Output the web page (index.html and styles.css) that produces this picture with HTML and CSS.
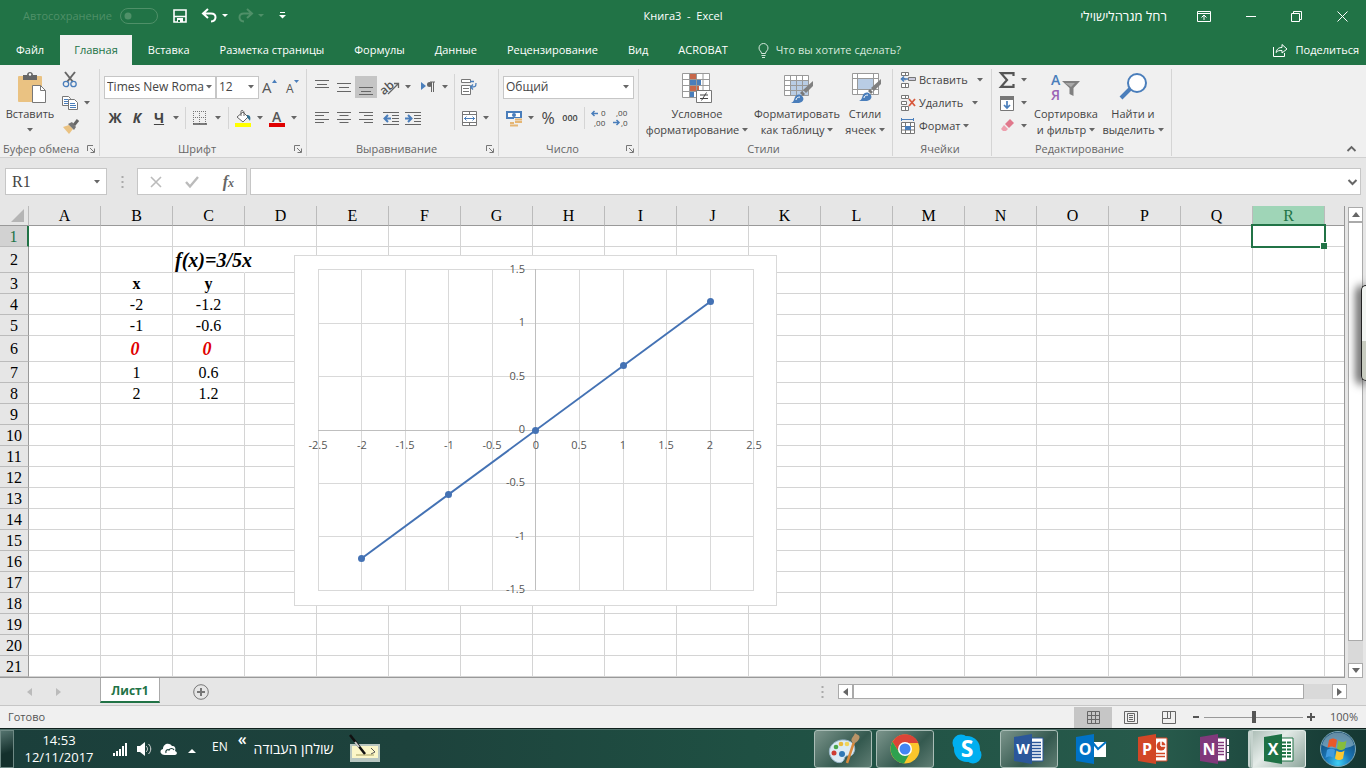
FILE: index.html
```html
<!DOCTYPE html>
<html lang="ru">
<head>
<meta charset="utf-8">
<title>Книга3 - Excel</title>
<link rel="stylesheet" href="styles.css">
</head>
<body>
<svg class="defs" aria-hidden="true">
  <defs>
    <symbol id="caret" viewBox="0 0 6 4"><path d="M0 0h6L3 3.500z" fill="#666"/></symbol>
    <symbol id="launch" viewBox="0 0 8 8"><path d="M.5 6V.5H6M3 3l4 4M7.500 3.500v4h-4" fill="none" stroke="#777"/></symbol>
    <symbol id="brush" viewBox="0 0 24 24"><path d="M23 1v5l-7 7-3-3z" fill="#808080"/><path d="M12 11l3 3-2 2-3-3z" fill="#777"/><path d="M1 23c3-1 3-4 4-6s4-4 7-1 1 6-3 7z" fill="#4a7ebb"/><path d="M6 20c0-2 2-3 4-3" stroke="#fff" fill="none"/></symbol>
  </defs>
</svg>

<header class="top">
  <div class="titlebar">
    <div class="quick">
      <span class="autosave">Автосохранение</span>
      <button class="bare switch" aria-label="Автосохранение"><svg width="38" height="16"><rect x=".5" y=".5" width="37" height="15" rx="7.500" fill="none" stroke="#4f9068"/><circle cx="8" cy="8" r="3.500" fill="#4f9068"/></svg></button>
      <button class="bare" aria-label="Сохранить"><svg width="14" height="14"><path d="M1 1h12v12H1zM1 7.500h12" fill="none" stroke="#fff" stroke-width="1.600"/><path d="M4 9h6v4H4z" fill="#fff"/><path d="M5 11h2v2H5z" fill="#217346"/></svg></button>
      <button class="bare undo" aria-label="Отменить"><svg width="26" height="14"><path d="M6 0L1 4.500 6 9M1.500 4.500H9c6 0 6 7.500 0 8" fill="none" stroke="#fff" stroke-width="2"/><path d="M20 5h6l-3 3z" fill="#fff"/></svg></button>
      <button class="bare" aria-label="Вернуть"><svg width="26" height="14"><path d="M9 0l5 4.500L9 9M13.500 4.500H6c-6 0-6 7.500 0 8" fill="none" stroke="#4f9068" stroke-width="2"/><path d="M20 5h6l-3 3z" fill="#4f9068"/></svg></button>
      <button class="bare more" aria-label="Настроить"><svg width="7" height="8"><path d="M1 .5h5" stroke="#fff"/><path d="M0 3h7L3.500 6.500z" fill="#fff"/></svg></button>
    </div>
    <h1 class="title">Книга3&nbsp; -&nbsp; Excel</h1>
    <div class="winbtns">
      <span class="user" dir="rtl">רחל מגרהלישוילי</span>
      <button class="bare" aria-label="Лента"><svg width="14" height="11"><path d="M.5.5h13v10H.5zM1 2.500h12M7 9V5M4.500 6.500L7 4l2.500 2.500" fill="none" stroke="#fff"/></svg></button>
      <button class="bare" aria-label="Свернуть"><svg width="10" height="11"><path d="M0 5.500h10" stroke="#fff"/></svg></button>
      <button class="bare" aria-label="Окно"><svg width="11" height="11"><path d="M.5 2.500h8v8h-8zM2.500 2.500v-2h8v8h-2" fill="none" stroke="#fff"/></svg></button>
      <button class="bare" aria-label="Закрыть"><svg width="11" height="11"><path d="M.5.5l10 10M10.500.5l-10 10" stroke="#fff"/></svg></button>
    </div>
  </div>
  <nav class="tabs">
    <a href="#">Файл</a><a href="#" class="active">Главная</a><a href="#">Вставка</a><a href="#">Разметка страницы</a><a href="#">Формулы</a><a href="#">Данные</a><a href="#">Рецензирование</a><a href="#">Вид</a><a href="#">ACROBAT</a>
    <a href="#" class="tell"><svg width="11" height="15"><path d="M3.500 10.500C3.500 8 1 8 1 5a4.500 4.500 0 0 1 9 0c0 3-2.500 3-2.500 5.500zM3.500 12.500h4M4 14.500h3" fill="none" stroke="#d5e8dc"/></svg>Что вы хотите сделать?</a>
    <a href="#" class="share"><svg width="16" height="14"><path d="M1.500 4v9.500h11V10" fill="none" stroke="#fff"/><path d="M4 9.500c1-4 3-5 6-5V1.500L15 6l-5 4V7.500c-3 0-4 0-6 2z" fill="none" stroke="#fff"/></svg>Поделиться</a>
  </nav>
</header>

<section class="ribbon">
  <div class="group clip">
    <div class="body">
      <button class="big paste"><svg width="30" height="32"><rect x="3" y="4" width="24" height="26" rx="1" fill="#eac282"/><path d="M8 3h4c0-4 6-4 6 0h4v5H8z" fill="#666"/><circle cx="15" cy="2.500" r="1.200" fill="#fff"/><path d="M17.500 13.500h8l5 5v12h-13z" fill="#fff" stroke="#777"/><path d="M25.500 13.500v5h5" fill="none" stroke="#777"/></svg><span>Вставить</span><svg class="caret"><use href="#caret"/></svg></button>
      <div class="stack">
        <button class="tool" aria-label="Вырезать"><svg width="16" height="16"><path d="M3 0l8 10M13 0L5 10" stroke="#666" stroke-width="2"/><circle cx="4" cy="12" r="2.700" fill="none" stroke="#4a7ebb" stroke-width="1.300"/><circle cx="11.500" cy="12" r="2.700" fill="none" stroke="#4a7ebb" stroke-width="1.300"/></svg></button>
        <div class="line"><button class="tool" aria-label="Копировать"><svg width="16" height="14"><path d="M.5.5h6l2 2v7h-8z" fill="#fff" stroke="#777"/><path d="M2 3.500h4M2 5.500h4M2 7.500h4" stroke="#4a7ebb"/><path d="M6.500 3.500h6l3 3v7h-9z" fill="#fff" stroke="#777"/><path d="M8 7.500h5M8 9.500h6M8 11.500h6" stroke="#4a7ebb"/></svg></button><button class="drop slim" aria-label="Ещё"><svg class="caret"><use href="#caret"/></svg></button></div>
        <button class="tool" aria-label="Формат по образцу"><svg width="17" height="15"><path d="M1 8l6-2 4 4-4 5z" fill="#eac282"/><path d="M6 5l6 6 2-3-4-5z" fill="#777"/><path d="M12 6l4-5" stroke="#666" stroke-width="3"/></svg></button>
      </div>
    </div>
    <div class="label"><span>Буфер обмена</span><svg class="launch"><use href="#launch"/></svg></div>
  </div>

  <div class="group font">
    <div class="body rows">
      <div class="line">
        <label class="combo name"><select aria-label="Шрифт"><option>Times New Roma</option></select><svg class="caret"><use href="#caret"/></svg></label>
        <label class="combo size"><select aria-label="Размер"><option>12</option></select><svg class="caret"><use href="#caret"/></svg></label>
        <button class="tool" aria-label="Увеличить"><svg width="16" height="16"><text x="0" y="14" font-size="15" fill="#555">A</text><path d="M10 4l2.500-3.500L15 4z" fill="#4a7ebb"/></svg></button>
        <button class="tool" aria-label="Уменьшить"><svg width="16" height="16"><text x="2" y="14" font-size="12" fill="#555">A</text><path d="M10 1l2.500 3L15 1z" fill="#4a7ebb"/></svg></button>
      </div>
      <div class="line">
        <button class="tool b">Ж</button><button class="tool b i">К</button><button class="tool b u">Ч</button><button class="drop slim" aria-label="Ещё"><svg class="caret"><use href="#caret"/></svg></button><i class="sep"></i>
        <button class="tool" aria-label="Границы"><svg width="14" height="14"><path d="M.5 0v13M6.500 0v13M12.500 0v13M0 .5h13M0 6.500h13" stroke="#777" stroke-dasharray="1 1" fill="none"/><path d="M0 13h14" stroke="#555" stroke-width="1.500"/></svg></button><button class="drop" aria-label="Ещё"><svg class="caret"><use href="#caret"/></svg></button><i class="sep"></i>
        <button class="tool" aria-label="Заливка"><svg width="17" height="17"><path d="M2 7l6-5 5 5-5 5z" fill="#fff" stroke="#666"/><path d="M6 6V1.500c0-2 3-1 3 1V6" fill="none" stroke="#666"/><path d="M12 5c3 0 4 2 3 6-1-2-2-2-3-4z" fill="#31708f"/><path d="M0 13h16v4H0z" fill="#ff0"/></svg></button><button class="drop slim" aria-label="Ещё"><svg class="caret"><use href="#caret"/></svg></button>
        <button class="tool" aria-label="Цвет текста"><svg width="17" height="17"><text x="3" y="12" font-size="14" font-weight="600" fill="#555">A</text><path d="M0 13h16v4H0z" fill="#e00000"/></svg></button><button class="drop slim" aria-label="Ещё"><svg class="caret"><use href="#caret"/></svg></button>
      </div>
    </div>
    <div class="label"><span>Шрифт</span><svg class="launch"><use href="#launch"/></svg></div>
  </div>

  <div class="group align">
    <div class="body">
      <div class="rows">
        <div class="line">
          <button class="tool" aria-label="По верху"><svg width="14" height="16"><path d="M0 1.500h14M2 5.500h10M0 8.500h14" stroke="#666"/></svg></button><button class="tool" aria-label="По середине"><svg width="14" height="16"><path d="M0 4.500h14M2 8.500h10M0 12.500h14" stroke="#666"/></svg></button><button class="tool on" aria-label="По низу"><svg width="14" height="16"><path d="M0 8.500h14M2 12.500h10M0 15.500h14" stroke="#666"/></svg></button>
          <button class="tool gap" aria-label="Ориентация"><svg width="17" height="16"><text x="-3" y="12" font-size="12" font-weight="600" fill="#555" transform="rotate(-40 5 9)">ab</text><path d="M5 15L15 5M11 4.500h4.500V9" stroke="#666" stroke-width="1.300" fill="none"/></svg></button><button class="drop slim" aria-label="Ещё"><svg class="caret"><use href="#caret"/></svg></button>
          <button class="tool gap" aria-label="Направление"><svg width="14" height="12"><path d="M0 1l5 4-5 4z" fill="#4a7ebb"/><path d="M9 1h5M10.500 1v10M12.500 1v10" stroke="#666"/><circle cx="8.500" cy="3.500" r="2.500" fill="#666"/></svg></button><button class="drop slim" aria-label="Ещё"><svg class="caret"><use href="#caret"/></svg></button>
        </div>
        <div class="line">
          <button class="tool" aria-label="Влево"><svg width="14" height="12"><path d="M0 .5h14M0 3.500h9M0 7.500h14M0 10.500h9" stroke="#666"/></svg></button><button class="tool" aria-label="По центру"><svg width="14" height="12"><path d="M0 .5h14M2.500 3.500h9M0 7.500h14M2.500 10.500h9" stroke="#666"/></svg></button><button class="tool" aria-label="Вправо"><svg width="14" height="12"><path d="M0 .5h14M5 3.500h9M0 7.500h14M5 10.500h9" stroke="#666"/></svg></button>
          <button class="tool gap" aria-label="Уменьшить отступ"><svg width="16" height="13"><path d="M0 .5h16M9 3.500h7M9 6.500h7M9 9.500h7M0 12.500h16" stroke="#666"/><path d="M8 6.500H2M5 3L1.500 6.500 5 10" fill="none" stroke="#4a7ebb" stroke-width="2"/></svg></button><button class="tool" aria-label="Увеличить отступ"><svg width="16" height="13"><path d="M0 .5h16M9 3.500h7M9 6.500h7M9 9.500h7M0 12.500h16" stroke="#666"/><path d="M0 6.500h6M3 3l3.500 3.500L3 10" fill="none" stroke="#4a7ebb" stroke-width="2"/></svg></button>
        </div>
      </div>
      <i class="sep tall"></i>
      <div class="rows">
        <div class="line"><button class="tool" aria-label="Перенос"><svg width="16" height="16"><path d="M.5.5h9v3h-9zM.5 6.500h9v9h-9zM2 9.500h6M2 12.500h6" fill="#fff" stroke="#777"/><path d="M9 2.500h4M15 4c0 4-1 4-5 4M12 5.500L9.500 8l2.500 2.500" fill="none" stroke="#4a7ebb" stroke-width="1.300"/></svg></button></div>
        <div class="line"><button class="tool" aria-label="Объединить"><svg width="15" height="15"><path d="M.5.5h14v14H.5zM.5 3.500h14M.5 11.500h14M7.500.5v3M7.500 11.500v3" fill="#fff" stroke="#777"/><path d="M2 7.500h11M4.500 5.500l-2 2 2 2M10.500 5.500l2 2-2 2" fill="none" stroke="#4a7ebb"/></svg></button><button class="drop slim" aria-label="Ещё"><svg class="caret"><use href="#caret"/></svg></button></div>
      </div>
    </div>
    <div class="label"><span>Выравнивание</span><svg class="launch"><use href="#launch"/></svg></div>
  </div>

  <div class="group number">
    <div class="body rows">
      <div class="line"><label class="combo wide"><select aria-label="Формат"><option>Общий</option></select><svg class="caret"><use href="#caret"/></svg></label></div>
      <div class="line">
        <button class="tool" aria-label="Валюта"><svg width="17" height="17"><path d="M0 1h16v8H0z" fill="#4a7ebb"/><path d="M2 3h12v4H2z" fill="#fff"/><circle cx="8" cy="5" r="2" fill="#4a7ebb"/><path d="M8 8h8v7H4v-4h4z" fill="#f0f0f0"/><path d="M9 9.500h7M9 12h7M4 13h4M4 15.500h8" stroke="#e5b674" stroke-width="2"/></svg></button><button class="drop slim" aria-label="Ещё"><svg class="caret"><use href="#caret"/></svg></button>
        <button class="tool pct">%</button><button class="tool zeros">000</button><i class="sep"></i>
        <button class="tool" aria-label="Увеличить разрядность"><svg width="16" height="16" font-size="8" fill="#444"><text x="10" y="6">0</text><text x="3" y="16">,00</text><path d="M7 3.500H1M3.500 1L1 3.500 3.500 6" fill="none" stroke="#4a7ebb" stroke-width="1.500"/></svg></button>
        <button class="tool" aria-label="Уменьшить разрядность"><svg width="16" height="16" font-size="8" fill="#444"><text x="3" y="6">,00</text><text x="8" y="16">,0</text><path d="M0 12.500h6M3.500 10L6 12.500 3.500 15" fill="none" stroke="#4a7ebb" stroke-width="1.500"/></svg></button>
      </div>
    </div>
    <div class="label"><span>Число</span><svg class="launch"><use href="#launch"/></svg></div>
  </div>

  <div class="group styles">
    <div class="body">
      <button class="big cond"><svg width="30" height="32"><path d="M.5 1.500h27v24H.5z" fill="#fff"/><path d="M8 2h6v5H8zM8 14h9v5H8z" fill="#c8684a"/><path d="M8 8h11v5H8zM8 20h4v5H8z" fill="#4a7ebb"/><path d="M.5 1.500h27v24H.5zM.5 7.500h27M.5 13.500h27M.5 19.500h27M7.500 1.500v24M14.500 1.500v24M21 1.500v24" fill="none" stroke="#999"/><path d="M14.500 18.500h15v12h-15z" fill="#fff" stroke="#777"/><path d="M18 23h8M18 26.500h8M24.500 20.500l-5 8" stroke="#444"/></svg><span>Условное<br>форматирование <svg class="caret"><use href="#caret"/></svg></span></button>
      <button class="big table"><svg width="30" height="32"><path d="M2.500 3.500h24v20h-24z" fill="#fff"/><path d="M9 9h18v15H9z" fill="#b9cde5"/><path d="M2.500 3.500h24v20h-24zM2.500 8.500h24M2.500 13.500h24M2.500 18.500h24M8.500 3.500v20M14.500 3.500v20M20.500 3.500v20" fill="none" stroke="#999"/><use href="#brush" x="8" y="8" width="24" height="24"/></svg><span>Форматировать<br>как таблицу <svg class="caret"><use href="#caret"/></svg></span></button>
      <button class="big cell"><svg width="30" height="32"><path d="M2.500 1.500h26v21h-26z" fill="#fff"/><path d="M8 7h15v10H8z" fill="#b9cde5"/><path d="M2.500 1.500h26v21h-26zM2.500 6.500h26M2.500 17.500h26M7.500 1.500v21M23.500 1.500v21" fill="none" stroke="#999"/><use href="#brush" x="8" y="6" width="24" height="24"/></svg><span>Стили<br>ячеек <svg class="caret"><use href="#caret"/></svg></span></button>
    </div>
    <div class="label"><span>Стили</span></div>
  </div>

  <div class="group cells">
    <div class="body">
      <div class="stack">
        <button class="item"><svg width="16" height="16"><path d="M1.500.5h7v3h-7zM1.500 11.500h7v4h-7zM5.500.5v3M5.500 11.500v4M1 6.500h4v2" fill="#fff" stroke="#777"/><path d="M8.500 5.500h7v3h-7z" fill="#ccd" stroke="#777"/><path d="M8 7H1.500M4 4.500L1.500 7 4 9.500" fill="none" stroke="#4a7ebb" stroke-width="1.600"/></svg><span>Вставить</span><svg class="caret far"><use href="#caret"/></svg></button>
        <button class="item"><svg width="16" height="16"><path d="M1.500.5h7v3h-7zM1.500 11.500h7v4h-7zM5.500.5v3M5.500 11.500v4M1.500 6.500h5v3h-5z" fill="#fff" stroke="#777"/><path d="M9 4l6 7M15 4l-6 7" stroke="#d8583c" stroke-width="1.800"/></svg><span>Удалить</span><svg class="caret far"><use href="#caret"/></svg></button>
        <button class="item"><svg width="16" height="16"><path d="M1.500 4.500h13v11h-13zM1.500 8.500h13M1.500 12h13M5.500 4.500v11M10.500 4.500v11" fill="#fff" stroke="#777"/><path d="M5 8h6v4H5z" fill="#4a7ebb"/><path d="M1 1.500h12M1.500 0v3M13.500 0v3" stroke="#4a7ebb"/></svg><span>Формат</span><svg class="caret"><use href="#caret"/></svg></button>
      </div>
    </div>
    <div class="label"><span>Ячейки</span></div>
  </div>

  <div class="group edit">
    <div class="body">
      <div class="stack">
        <div class="line"><button class="tool" aria-label="Сумма"><svg width="16" height="16"><path d="M14.500 4V1.200H2L8 8l-6 6.800h12.500V12" fill="none" stroke="#555" stroke-width="2.200"/></svg></button><button class="drop slim" aria-label="Ещё"><svg class="caret"><use href="#caret"/></svg></button></div>
        <div class="line"><button class="tool" aria-label="Заполнить"><svg width="14" height="15"><path d="M.5.5h13v14H.5z" fill="#fff" stroke="#777"/><path d="M0 0h14v4H0z" fill="#777"/><path d="M7 5v7M4 9l3 3 3-3" fill="none" stroke="#4a7ebb" stroke-width="1.700"/></svg></button><button class="drop slim" aria-label="Ещё"><svg class="caret"><use href="#caret"/></svg></button></div>
        <div class="line"><button class="tool" aria-label="Очистить"><svg width="14" height="14"><path d="M5 5l5-5 4 4-5 5z" fill="#e0788c"/><path d="M4 6l4 4-2 2H3L1 10z" fill="#eda0ae"/></svg></button><button class="drop slim" aria-label="Ещё"><svg class="caret"><use href="#caret"/></svg></button></div>
      </div>
      <button class="big sort"><svg width="30" height="32"><text x="0" y="13" font-size="14" font-weight="600" fill="#4a7ebb">А</text><text x="0" y="28" font-size="14" font-weight="600" fill="#9b62b5">Я</text><path d="M11 9h18l-6.500 7v8l-4-2v-6z" fill="#808080"/><path d="M14 11h10l-4 4z" fill="#aaa"/></svg><span>Сортировка<br>и фильтр <svg class="caret"><use href="#caret"/></svg></span></button>
      <button class="big find"><svg width="30" height="32"><path d="M12 17L3 26" stroke="#4a7ebb" stroke-width="4"/><circle cx="19" cy="11" r="9" fill="#fff" stroke="#4a7ebb" stroke-width="2"/></svg><span>Найти и<br>выделить <svg class="caret"><use href="#caret"/></svg></span></button>
    </div>
    <div class="label"><span>Редактирование</span></div>
  </div>
  <button class="bare fold" aria-label="Свернуть ленту"><svg width="9" height="6"><path d="M.5 5l4-4 4 4" fill="none" stroke="#666" stroke-width="1.800"/></svg></button>
</section>

<section class="formula">
  <label class="namebox"><input value="R1" aria-label="Имя"><svg class="caret"><use href="#caret"/></svg></label>
  <svg class="dots" width="3" height="12"><path d="M1.500 0v12" stroke="#aaa" stroke-width="2" stroke-dasharray="2 3"/></svg>
  <div class="fxbox">
    <button class="bare" aria-label="Отмена"><svg width="12" height="12"><path d="M1 1l10 10M11 1L1 11" stroke="#bbb" stroke-width="1.600"/></svg></button>
    <button class="bare" aria-label="Ввод"><svg width="14" height="12"><path d="M1 6l4 4.500L13 1" fill="none" stroke="#bbb" stroke-width="2.400"/></svg></button>
    <button class="bare fx">f<small>x</small></button>
  </div>
  <label class="fbar"><input aria-label="Формула"><svg width="9" height="6"><path d="M.5 1l4 4 4-4" fill="none" stroke="#666" stroke-width="2"/></svg></label>
</section>

<main class="sheet">
  <div class="gridwrap">
    <table class="grid" id="grid"></table>
    <figure class="chart">
      <svg width="481" height="349" viewBox="295 256 481 349">
        <path d="M318.500 269v321M361.500 269v321M405.500 269v321M448.500 269v321M492.500 269v321M579.500 269v321M623.500 269v321M666.500 269v321M710.500 269v321M753.500 269v321M318 269.500h436M318 323.500h436M318 376.500h436M318 483.500h436M318 536.500h436M318 590.500h436" stroke="#d9d9d9"/>
        <path d="M535.500 269v321M318 430.500h436" stroke="#bfbfbf"/>
        <path d="M361.500 558.500L710.500 301.500" stroke="#4472b4" stroke-width="2"/>
        <g fill="#4472b4"><circle cx="361.500" cy="558.500" r="3.500"/><circle cx="448.500" cy="494.500" r="3.500"/><circle cx="535.500" cy="430.500" r="3.500"/><circle cx="623.500" cy="365.500" r="3.500"/><circle cx="710.500" cy="301.500" r="3.500"/></g>
        <g class="xax"><text x="318" y="449">-2.5</text><text x="362" y="449">-2</text><text x="405" y="449">-1.5</text><text x="449" y="449">-1</text><text x="492" y="449">-0.5</text><text x="536" y="449">0</text><text x="579" y="449">0.5</text><text x="623" y="449">1</text><text x="666" y="449">1.5</text><text x="710" y="449">2</text><text x="754" y="449">2.5</text></g>
        <g class="yax"><text x="525" y="273">1.5</text><text x="525" y="326">1</text><text x="525" y="380">0.5</text><text x="525" y="433">0</text><text x="525" y="486">-0.5</text><text x="525" y="540">-1</text><text x="525" y="593">-1.5</text></g>
      </svg>
    </figure>
  </div>
  <div class="vscroll"><span class="arrow"><svg width="8" height="5"><path d="M0 5l4-5 4 5z" fill="#666"/></svg></span><span class="thumb"></span><span class="track"></span><span class="arrow"><svg width="8" height="5"><path d="M0 0h8L4 5z" fill="#666"/></svg></span></div>
  <div class="gadget"></div>
</main>

<section class="sheetbar">
  <button class="bare nav" aria-label="Назад"><svg width="5" height="8"><path d="M5 0v8L0 4z" fill="#bbb"/></svg></button>
  <button class="bare nav" aria-label="Вперёд"><svg width="5" height="8"><path d="M0 0v8l5-4z" fill="#bbb"/></svg></button>
  <a href="#" class="sheettab">Лист1</a>
  <button class="bare add" aria-label="Новый лист"><svg width="16" height="16"><circle cx="8" cy="8" r="7.300" fill="none" stroke="#777"/><path d="M4 8h8M8 4v8" stroke="#777" stroke-width="2"/></svg></button>
  <svg class="dots" width="3" height="12"><path d="M1.500 0v12" stroke="#aaa" stroke-width="2" stroke-dasharray="2 3"/></svg>
  <div class="hscroll"><span class="arrow"><svg width="5" height="8"><path d="M5 0v8L0 4z" fill="#666"/></svg></span><span class="thumb"></span><span class="track"></span><span class="arrow"><svg width="5" height="8"><path d="M0 0v8l5-4z" fill="#666"/></svg></span></div>
</section>

<footer class="status">
  <span class="ready">Готово</span>
  <button class="bare view on" aria-label="Обычный"><svg width="13" height="13"><path d="M.5.5h12v12H.5zM.5 4.500h12M.5 8.500h12M4.500.5v12M8.500.5v12" fill="none" stroke="#666"/></svg></button>
  <button class="bare view" aria-label="Разметка"><svg width="14" height="13"><path d="M.5.5h13v12H.5zM3.500 2.500h7v8h-7zM5 4.500h4M5 6.500h4M5 8.500h4" fill="none" stroke="#666"/></svg></button>
  <button class="bare view" aria-label="Страничный"><svg width="14" height="13"><path d="M.5.5h13v12H.5zM5.500.5v7h-5M8.500.5v7h-3M8.500 7.500v-7" fill="none" stroke="#666"/></svg></button>
  <button class="bare zoombtn" aria-label="Мельче"><svg width="8" height="8"><path d="M1 4h6" stroke="#555" stroke-width="2"/></svg></button>
  <input class="zoom" type="range" min="0" max="100" value="50" aria-label="Масштаб">
  <button class="bare zoombtn" aria-label="Крупнее"><svg width="8" height="8"><path d="M0 4h8M4 0v8" stroke="#555" stroke-width="2"/></svg></button>
  <span class="pct100">100%</span>
</footer>

<footer class="taskbar">
  <button class="bare peek" aria-label="Рабочий стол"></button>
  <div class="clock"><span>14:53</span><span>12/11/2017</span></div>
  <svg class="tray" width="92" height="18">
    <path d="M2 13v3M5 11v5M8 9v7M11 6v10M14 3v13" stroke="#fff" stroke-width="2"/>
    <path d="M25 6h3l5-4v14l-5-4h-3z" fill="#fff"/><path d="M34 6c2 2 2 4 0 6M36.500 4c3 3 3 7 0 10" fill="none" stroke="#ddd"/>
    <path d="M53 15c-5 0-6-5-2-6 0-5 6-7 9-3 3 0 4 2 3 5 3 1 2 4 0 4z" fill="#fff"/><path d="M54 13c-1-3 2-4 3-3 1-2 4-2 5 0" fill="none" stroke="#1d423c" stroke-width="1.200"/>
    <path d="M76 13h8l-4-4z" fill="#fff"/>
  </svg>
  <span class="lang">EN</span>
  <span class="chev">«</span>
  <span class="desk" dir="rtl">שולחן העבודה</span>
  <svg class="tablet" width="32" height="30"><path d="M1 10h30v18H1z" fill="#b8c6c0"/><path d="M3 12h26v12H3z" fill="#fbf6c8"/><path d="M7 21h18" stroke="#a8a060"/><path d="M22 14l4 4-4 2" fill="none" stroke="#555"/><path d="M1 1l15 19" stroke="#111" stroke-width="2.500"/><path d="M6 8l4 5" stroke="#ccc" stroke-width="2"/></svg>
  <nav class="apps">
    <button class="app open" aria-label="Paint"><svg width="32" height="32"><path d="M3 22C0 14 8 6 18 7c9 1 12 8 8 14-2 3-4 1-7 2-2 1-1 4-4 6-4 2-10-1-12-7z" fill="#dcebf4" stroke="#9ab8cc"/><circle cx="7" cy="20" r="2.500" fill="#cf3c32"/><circle cx="9" cy="14" r="2.300" fill="#4aa64c"/><circle cx="14" cy="11" r="2.300" fill="#e9ba3b"/><circle cx="20" cy="11" r="2.300" fill="#f0d45a"/><circle cx="15" cy="21" r="3" fill="#3178b5"/><path d="M27 9l-7 21" stroke="#d98a3d" stroke-width="2.500"/><path d="M25 9c-2-4 2-5 3-9 2 2 6 2 4 6-1 2-3 4-5 4z" fill="#b99468"/></svg></button>
    <button class="app open" aria-label="Chrome"><svg width="30" height="30"><circle cx="15" cy="15" r="14.500" fill="#fbc62c"/><path d="M2.500 7.800A14.500 14.500 0 0 1 28.500 9H15l-6 9z" fill="#db4437"/><path d="M2.500 7.800A14.500 14.500 0 0 0 14 29.500L20.500 18 9 18z" fill="#2ea14f"/><circle cx="15" cy="15" r="7" fill="#fff"/><circle cx="15" cy="15" r="5.500" fill="#4285f4"/></svg></button>
    <button class="app" aria-label="Skype"><svg width="32" height="32"><circle cx="10" cy="10" r="8.500" fill="#00aff0"/><circle cx="22" cy="22" r="8.500" fill="#00aff0"/><circle cx="16" cy="16" r="13" fill="#00aff0"/><text x="16" y="24" text-anchor="middle" font-size="23" font-weight="700" fill="#fff">S</text></svg></button>
    <button class="app open" aria-label="Word"><svg width="30" height="30"><path d="M16 4h13v23H16z" fill="#fff" stroke="#2b579a"/><path d="M18 8.500h9M18 11.500h9M18 14.500h9M18 17.500h9M18 20.500h9M18 23.500h9" stroke="#2b579a" stroke-width="1.500"/><path d="M0 3l18-3v30L0 27z" fill="#2b579a"/><text x="9" y="20" text-anchor="middle" font-size="14" font-weight="700" fill="#fff">W</text></svg></button>
    <button class="app" aria-label="Outlook"><svg width="30" height="30"><path d="M17 8h13v15H17z" fill="#fff"/><path d="M17 9l5 6 8-7" fill="none" stroke="#0072c6" stroke-width="2"/><path d="M0 3l18-3v30L0 27z" fill="#0072c6"/><text x="9" y="21" text-anchor="middle" font-size="16" font-weight="700" fill="#fff">O</text></svg></button>
    <button class="app" aria-label="PowerPoint"><svg width="30" height="30"><path d="M16 4h13v23H16z" fill="#fff" stroke="#d24726"/><circle cx="23" cy="12" r="4.500" fill="#d24726"/><path d="M23 12V7M23 12h5" stroke="#fff" stroke-width="1.500"/><path d="M18 19.500h9M18 22.500h9" stroke="#d24726" stroke-width="1.500"/><path d="M0 3l18-3v30L0 27z" fill="#d24726"/><text x="9" y="21" text-anchor="middle" font-size="16" font-weight="700" fill="#fff">P</text></svg></button>
    <button class="app" aria-label="OneNote"><svg width="30" height="30"><path d="M16 4h10v23H16z" fill="#fff" stroke="#80397b"/><path d="M18 8.500h6M18 11.500h6M18 14.500h6M18 17.500h6M18 20.500h6" stroke="#80397b" stroke-width="1.500"/><path d="M27 5h2v6h-2zM27 12h2v6h-2zM27 19h2v6h-2z" fill="#fff"/><path d="M0 3l18-3v30L0 27z" fill="#80397b"/><text x="9" y="21" text-anchor="middle" font-size="16" font-weight="700" fill="#fff">N</text></svg></button>
    <button class="app current" aria-label="Excel"><svg width="30" height="30"><path d="M16 4h13v23H16z" fill="#fff" stroke="#217346"/><path d="M18 8.500h9M18 12h9M18 15.500h9M18 19h9M18 22.500h9" stroke="#217346" stroke-width="2" stroke-dasharray="4 1"/><path d="M0 3l18-3v30L0 27z" fill="#1e7145"/><text x="9" y="21" text-anchor="middle" font-size="16" font-weight="700" fill="#fff">X</text></svg></button>
    <button class="bare orb" aria-label="Пуск"><svg width="38" height="38"><defs><radialGradient id="o" cx=".5" cy=".9" r=".9"><stop offset="0" stop-color="#3fd0f5"/><stop offset=".4" stop-color="#1a76b8"/><stop offset="1" stop-color="#0e3f63"/></radialGradient></defs><circle cx="19" cy="19" r="17.500" fill="url(#o)" stroke="#7fa9b8"/><path d="M3 15a16.500 16.500 0 0 1 32 0c-8 5-24 5-32 0z" fill="#b9d3dc" opacity=".5"/><path d="M10 10c3-2 5-2 8 0l-1.500 8c-3-2-5-2-8 0z" fill="#e8592a"/><path d="M19.500 10.500c3 2 5 2 8 0L26 18.500c-3 2-5 2-8 0z" fill="#86bd3c"/><path d="M8 20c3-2 5-2 8 0l-1.500 8c-3-2-5-2-8 0z" fill="#3f9be0"/><path d="M17.500 20.500c3 2 5 2 8 0L24 28.500c-3 2-5 2-8 0z" fill="#fbc731"/></svg></button>
  </nav>
</footer>
<script src="app.js"></script>
</body>
</html>
```

FILE: styles.css
```css
* { box-sizing: border-box; }
body {
  margin: 0;
  min-height: 100vh;
  display: flex;
  flex-direction: column;
  background: #e6e6e6;
  color: #444;
  font: 11px/16px "Open Sans", "Noto Sans", sans-serif;
  overflow: hidden;
}
svg { display: block; flex: none; overflow: visible; }
svg text { font-family: "Open Sans", "Noto Sans", sans-serif; }
.defs { position: absolute; width: 0; height: 0; }
button, input, select { font: inherit; color: inherit; border: 0; background: none; padding: 0; margin: 0; outline: 0; border-radius: 0; }
a { color: inherit; text-decoration: none; }
.caret { width: 6px; height: 4px; }
.launch { width: 8px; height: 8px; }
.bare { display: flex; align-items: center; justify-content: center; }

/* Title bar and tabs */
.top { background: #217346; color: #fff; }
.titlebar { height: 35px; display: grid; grid-template-columns: 1fr auto 1fr; align-items: center; padding: 0 18px 3px; }
.quick { display: flex; align-items: center; gap: 15px; padding-left: 5px; }
.autosave { color: #4f9068; margin-right: -7px; }
.undo { margin-right: -5px; }
.title { margin: 0; font-size: 11px; font-weight: 400; }
.winbtns { display: flex; align-items: center; justify-content: flex-end; gap: 35px; }
.user { margin-right: -5px; font-size: 13px; }
.tabs { display: flex; height: 30px; gap: 2px; padding-left: 2px; }
.tabs a { display: flex; align-items: center; padding: 0 14px; white-space: nowrap; }
.tabs .active { background: #f0f0f0; color: #217346; }
.tabs .tell { gap: 7px; color: #d5e8dc; }
.tabs .share { gap: 8px; margin-left: auto; padding: 0 7px; }

/* Ribbon */
.ribbon { display: flex; height: 93px; background: #f0f0f0; border-bottom: 1px solid #d0d0d0; }
.group { display: flex; flex-direction: column; border-right: 1px solid #d5d5d5; margin: 4px 0 1px; flex: none; }
.body { display: flex; height: 73px; }
.label { display: flex; justify-content: center; align-items: center; height: 14px; color: #666; padding-right: 4px; }
.label span { flex: 1; text-align: center; white-space: nowrap; }
.clip .label span { text-align: left; padding-left: 3px; }
.rows { display: flex; flex-direction: column; gap: 9px; padding-top: 7px; }
.line { display: flex; align-items: center; height: 22px; }
.stack { display: flex; flex-direction: column; gap: 1px; }
.tool { display: flex; align-items: center; justify-content: center; width: 22px; height: 22px; flex: none; }
.tool.on { background: #c5c5c5; }
.tool.gap { margin-left: 3px; }
.tool.b { font-weight: 700; font-size: 14px; }
.tool.i { font-style: italic; }
.tool.u { text-decoration: underline; }
.tool.pct { font-size: 16px; }
.tool.zeros { font-size: 9px; font-weight: 600; }
.drop { display: flex; align-items: center; justify-content: center; width: 14px; height: 22px; flex: none; }
.drop.slim { width: 12px; }
.sep { width: 1px; height: 22px; background: #d5d5d5; margin: 0 3px; flex: none; }
.sep.tall { height: 56px; margin: 5px 3px 0; }
.combo { display: grid; align-items: center; height: 23px; border: 1px solid #c6c6c6; background: #fff; font-size: 12px; }
.combo select { grid-area: 1 / 1; appearance: none; width: 100%; padding-left: 2px; overflow: hidden; }
.combo .caret { grid-area: 1 / 1; justify-self: end; margin-right: 4px; pointer-events: none; }
.name { width: 112px; }
.name .caret { margin-right: 3px; }
.size { width: 43px; }
.combo.wide { width: 131px; }
.big { display: flex; flex-direction: column; align-items: center; padding-top: 3px; text-align: center; flex: none; white-space: nowrap; }
.big > svg:first-child { margin-bottom: 2px; }
.big span .caret { display: inline-block; vertical-align: 2px; }
.paste { width: 58px; margin-left: 1px; }
.paste > .caret { margin-top: 6px; }
.clip { width: 100px; }
.font { width: 207px; }
.font .rows { padding-left: 4px; }
.align { width: 192px; }
.align .body { padding-left: 4px; }
.number { width: 140px; }
.number .rows { padding-left: 4px; }
.styles { width: 254px; }
.styles .body { padding-left: 2px; }
.cond { width: 112px; }
.table { width: 88px; }
.cell { width: 48px; }
.cells { width: 99px; }
.cells .body { padding-left: 7px; }
.item { display: flex; align-items: center; height: 22px; gap: 3px; white-space: nowrap; }
.far { margin-left: 6px; }
.edit { width: 180px; }
.edit .body { padding-left: 4px; }
.sort { width: 72px; }
.find { width: 62px; }
.fold { margin: auto 10px 5px auto; }

/* Formula bar */
.formula { display: flex; align-items: center; height: 48px; padding: 0 5px 1px; }
.namebox, .fxbox, .fbar { display: flex; align-items: center; height: 27px; background: #fff; border: 1px solid #c6c6c6; }
.namebox { width: 102px; padding: 0 6px; }
.namebox input { width: 100%; font: 16px "Liberation Serif", serif; }
.formula .dots { margin: 0 13px 0 14px; }
.fxbox { width: 110px; justify-content: space-between; padding: 0 12px; margin-right: 3px; }
.fx { font: italic 700 16px "Liberation Serif", serif; color: #666; }
.fx small { font-size: 12px; padding-top: 3px; }
.fbar { flex: 1; padding-right: 3px; }
.fbar input { flex: 1; }

/* Sheet */
.sheet { display: flex; flex: 1; position: relative; }
.gridwrap { flex: 1; position: relative; background: #fff; border-right: 1px solid #999; border-bottom: 1px solid #999; }
.grid { width: 100%; table-layout: fixed; border-collapse: separate; border-spacing: 0; font: 16px/18px "Liberation Serif", serif; color: #000; }
.grid td, .grid th { padding: 0; height: 21px; font-weight: 400; text-align: center; vertical-align: bottom; border-right: 1px solid #d4d4d4; border-bottom: 1px solid #d4d4d4; white-space: nowrap; }
.grid thead th { height: 20px; background: #e6e6e6; border-right-color: #bbb; border-bottom-color: #999; }
.grid tbody th { background: #e6e6e6; border-right-color: #999; border-bottom-color: #bbb; }
.grid tbody th.rowsel { background: #d2d2d2; color: #217346; border-right: 2px solid #217346; }
.grid thead th.colsel { background: #9fd5b7; color: #217346; }
.grid tr > :last-child { border-right: 0; }
.grid .tallrow td, .grid .tallrow th { height: 26px; vertical-align: middle; }
.grid .head { font-weight: 700; }
.grid .zero { font-weight: 700; font-style: italic; font-size: 18px; color: #e00000; padding-right: 3px; }
.grid .fn { font-weight: 700; font-style: italic; font-size: 20px; text-align: left; padding-left: 2px; border-right-color: transparent; }
.rowcol { width: 29px; }
.datacol { width: 72px; }
.corner svg { margin: 0 4px 3px auto; }
.grid td.cursor { position: relative; }
.cursor::before { content: ""; position: absolute; inset: -2px; border: 2px solid #217346; }
.cursor::after { content: ""; position: absolute; right: -3px; bottom: -3px; width: 6px; height: 6px; background: #217346; border: solid #fff; border-width: 1px 0 0 1px; }
.chart { position: absolute; left: 294px; top: 49px; margin: 0; border: 1px solid #d9d9d9; background: #fff; }
.chart text { font-size: 11px; fill: #555; }
.xax { text-anchor: middle; }
.yax { text-anchor: end; }
.vscroll { display: flex; flex-direction: column; width: 21px; padding: 1px 3px 0 3px; }
.arrow { display: flex; align-items: center; justify-content: center; width: 15px; height: 15px; background: #fff; border: 1px solid #aaa; flex: none; }
.thumb { background: #fff; border: 1px solid #aaa; }
.track { background: #d9d9d9; }
.vscroll .thumb { flex: 421; }
.vscroll .track { flex: 22; }
.gadget { position: absolute; right: 0; top: 79px; width: 5px; height: 96px; border: 1px solid #222; border-right: 0; border-radius: 6px 0 0 6px; background: linear-gradient(#f2f5f2 58%, #c8ccc0 58%); box-shadow: -3px 2px 8px 2px #555; }

/* Sheet tabs and status */
.sheetbar { display: flex; align-items: center; height: 28px; border-bottom: 1px solid #c6c6c6; padding-left: 27px; }
.nav + .nav { margin-left: 24px; }
.sheettab { align-self: flex-start; margin-left: 39px; width: 60px; height: 25px; line-height: 25px; text-align: center; font-size: 12px; font-weight: 700; color: #217346; background: #fff; border: 1px solid #aaa; border-top: 0; border-bottom: 2px solid #217346; }
.add { margin-left: 33px; }
.sheetbar .dots { margin-left: auto; }
.hscroll { display: flex; width: 38%; margin: 0 19px 0 14px; }
.hscroll .thumb { flex: 453; }
.hscroll .track { flex: 28; }
.status { display: flex; align-items: center; height: 22px; background: #f0f0f0; padding: 0 8px; color: #555; }
.ready { margin-right: auto; }
.view { width: 38px; height: 21px; }
.view.on { background: #c6c6c6; }
.zoombtn { width: 16px; }
.zoom { appearance: none; width: 99px; height: 12px; }
.zoom::-webkit-slider-runnable-track { height: 12px; background: linear-gradient(#999, #999) center / 100% 1px no-repeat; }
.zoom::-webkit-slider-thumb { appearance: none; width: 4px; height: 12px; background: #555; }
.pct100 { margin-left: 11px; }

/* Taskbar */
.taskbar { display: flex; align-items: center; height: 40px; border-top: 1px solid #10201d; background: linear-gradient(90deg, #1b3f3b, #1d423c 30%, #1f5043 55%, #275a4b 85%, #153733); box-shadow: inset 0 1px #4d7069; color: #fff; }
.peek { width: 14px; height: 38px; background: linear-gradient(160deg, #54736e, #14302c 60%); border: 1px solid #6f8a85; }
.clock { display: flex; flex-direction: column; align-items: center; width: 90px; font-size: 13px; line-height: 17px; }
.tray { margin-left: 8px; }
.lang { margin-left: 8px; margin-bottom: 4px; font-size: 12px; }
.chev { margin-left: 10px; margin-bottom: 20px; font-size: 16px; font-weight: 600; }
.desk { margin-left: 7px; font-size: 14px; }
.tablet { margin-left: 15px; }
.apps { display: flex; align-items: center; gap: 4px; margin-left: auto; }
.app { display: flex; align-items: center; justify-content: center; width: 58px; height: 38px; }
.open { border: 1px solid #a9bdb6; border-radius: 3px; background: linear-gradient(135deg, #7b948b, #34594f 60%, #5f7d73); }
.current { border: 1px solid #e2ebe7; border-left: 5px double #c5d2cd; border-radius: 3px; background: linear-gradient(135deg, #aebfb8, #e4ebe8 40%, #8ca59b); }
.orb { width: 56px; }
```

FILE: app.js
```javascript
const letters = "ABCDEFGHIJKLMNOPQR";
const values = {
  C2: ["f(x)=3/5x", "fn"],
  B3: ["x", "head"], C3: ["y", "head"],
  B4: ["-2"], C4: ["-1.2"],
  B5: ["-1"], C5: ["-0.6"],
  B6: ["0", "zero"], C6: ["0", "zero"],
  B7: ["1"], C7: ["0.6"],
  B8: ["2"], C8: ["1.2"],
  R1: ["", "cursor"]
};
const cols = [...letters];
let html = '<colgroup><col class="rowcol">' + '<col class="datacol">'.repeat(18) + "<col></colgroup>";
html += '<thead><tr><th class="corner"><svg width="13" height="13"><path d="M13 0v13H0z" fill="#b5b5b5"/></svg></th>';
html += cols.map(c => `<th class="${c === "R" ? "colsel" : ""}">${c}</th>`).join("") + "<th></th></tr></thead><tbody>";
for (let r = 1; r <= 21; r++) {
  html += `<tr class="${r === 2 || r === 6 ? "tallrow" : ""}"><th class="${r === 1 ? "rowsel" : ""}">${r}</th>`;
  for (const c of cols) {
    const [text, kind] = values[c + r] || [""];
    html += `<td class="${kind || ""}">${text}</td>`;
  }
  html += "<td></td></tr>";
}
document.getElementById("grid").innerHTML = html + "</tbody>";
```
